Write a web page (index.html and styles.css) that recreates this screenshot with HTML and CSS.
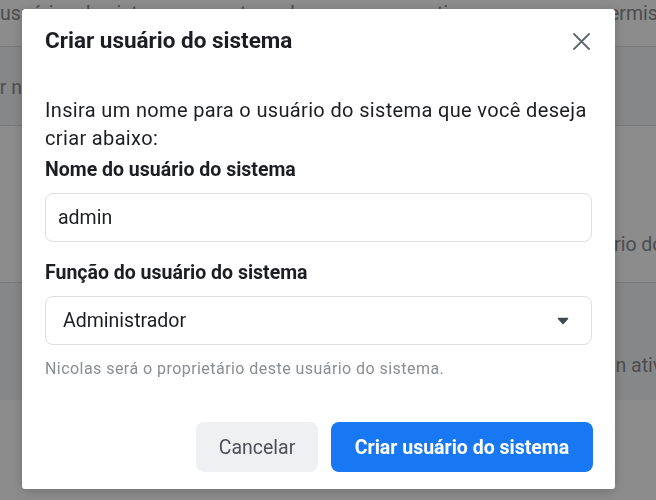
FILE: index.html
```html
<!DOCTYPE html>
<html lang="pt-BR">
<head>
<meta charset="utf-8">
<title>Criar usuário do sistema</title>
<link rel="stylesheet" href="styles.css">
</head>
<body>
<div class="page">
  <div class="row row-top">
    <span class="top-left">usuários do sistema somente podem acessar os ativos para os</span>
    <span class="top-right">permissões</span>
  </div>
  <div class="row row-search"><span class="search-text">Pesquisar nome</span></div>
  <div class="row row-users"><span class="users-text">Usuário do sistema</span></div>
  <div class="row row-assets"><span class="assets-text">admin ativo</span></div>
</div>
<div class="overlay">
  <div class="modal" role="dialog" aria-labelledby="modal-title">
    <div class="modal-header">
      <h2 class="modal-title" id="modal-title">Criar usuário do sistema</h2>
      <button class="close" aria-label="Fechar">
        <svg width="17" height="17" viewBox="0 0 17 17"><path d="M1 1L16 16M16 1L1 16" stroke="#606770" stroke-width="1.8" stroke-linecap="round" fill="none"/></svg>
      </button>
    </div>
    <div class="modal-body">
      <p class="intro">Insira um nome para o usuário do sistema que você deseja criar abaixo:</p>
      <label class="field-label">Nome do usuário do sistema</label>
      <div class="input">admin</div>
      <label class="field-label second">Função do usuário do sistema</label>
      <div class="select">
        <span>Administrador</span>
        <svg width="12" height="8" viewBox="0 0 12 8"><path d="M1.5 1.5H10.5L6 6.5Z" fill="#444950" stroke="#444950" stroke-width="1.6" stroke-linejoin="round"/></svg>
      </div>
      <p class="helper">Nicolas será o proprietário deste usuário do sistema.</p>
    </div>
    <div class="modal-footer">
      <button class="btn btn-secondary">Cancelar</button>
      <button class="btn btn-primary">Criar usuário do sistema</button>
    </div>
  </div>
</div>
</body>
</html>
```
FILE: styles.css
```css
* { box-sizing: border-box; }
html, body { margin: 0; padding: 0; }
body {
  font-family: Roboto, "Liberation Sans", Arial, sans-serif;
  background: #ffffff;
  width: 656px;
  height: 500px;
  overflow: hidden;
}

.page {
  font-size: 19.5px;
  line-height: 24px;
  color: #8a8d91;
  white-space: nowrap;
}
.row {
  overflow: hidden;
  border-bottom: 1px solid #dadde1;
}
.row-top {
  height: 47px;
  display: grid;
  grid-template-columns: 598px 1fr;
  padding-top: 2px;
}
.top-left, .top-right { overflow: hidden; }
.row-search {
  height: 79px;
  background: #f5f6f7;
  padding-top: 29px;
}
.search-text { display: inline-block; margin-left: -80px; }
.row-users {
  height: 157px;
  padding-top: 107px;
}
.users-text { display: inline-block; margin-left: 570px; }
.row-assets {
  height: 117px;
  background: #f5f6f7;
  padding-top: 71px;
  border-bottom: none;
}
.assets-text { display: inline-block; margin-left: 572px; }

.overlay {
  position: fixed;
  inset: 0;
  background: rgba(0, 0, 0, 0.45);
  padding: 9px 0 0 22px;
}
.modal {
  width: 593px;
  background: #ffffff;
  border-radius: 3px;
  box-shadow: 0 2px 12px rgba(0, 0, 0, 0.2);
  color: #1c1e21;
}
.modal-header {
  height: 61px;
  padding: 0 25px 0 23px;
  display: flex;
  align-items: center;
  justify-content: space-between;
}
.modal-title {
  margin: 0;
  font-size: 22.5px;
  line-height: 28px;
  font-weight: 700;
  color: #1c1e21;
}
.close {
  border: none;
  background: none;
  padding: 0;
  margin-top: 3px;
  width: 17px;
  height: 17px;
  display: flex;
}
.modal-body {
  padding: 0 23px;
}
.intro {
  margin: 26px 0 0;
  font-size: 20px;
  letter-spacing: 0.35px;
  line-height: 28px;
  color: #1c1e21;
}
.field-label {
  display: block;
  margin-top: 6px;
  font-size: 19.5px;
  line-height: 24px;
  font-weight: 700;
  color: #1c1e21;
}
.field-label.second { margin-top: 19px; }
.input, .select {
  margin-top: 11px;
  height: 49px;
  border: 1px solid #dddfe2;
  border-radius: 8px;
  display: flex;
  align-items: center;
  font-size: 19.5px;
  color: #1c1e21;
}
.input { padding: 0 12px; }
.select {
  padding: 0 22px 0 17px;
  justify-content: space-between;
}
.helper {
  margin: 14px 0 0;
  font-size: 16px;
  letter-spacing: 0.45px;
  line-height: 20px;
  color: #8a8d91;
}
.modal-footer {
  margin-top: 43px;
  padding: 0 22px 17px 23px;
  display: flex;
  justify-content: flex-end;
  gap: 13px;
}
.btn {
  height: 50px;
  border: none;
  border-radius: 8px;
  font-family: inherit;
  font-size: 19.5px;
  padding: 0 22px;
}
.btn-secondary {
  background: #eff0f2;
  color: #4b4f56;
  width: 122px;
}
.btn-primary {
  background: #1877f2;
  color: #ffffff;
  font-weight: 700;
  width: 262px;
}
```
